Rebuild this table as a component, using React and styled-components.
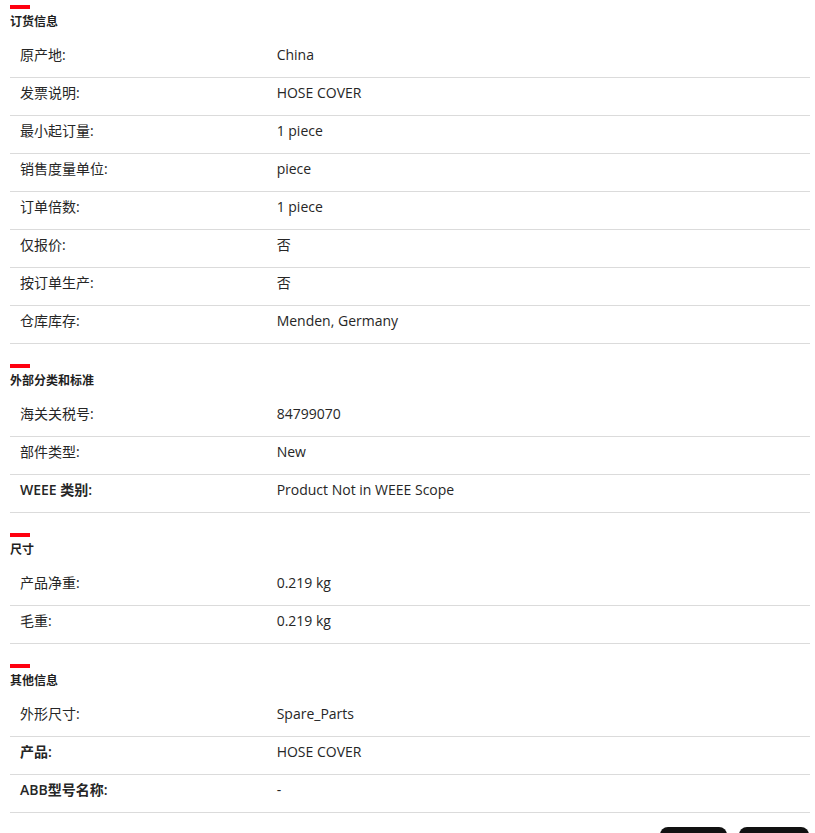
import styled, { createGlobalStyle } from "styled-components";

const GlobalStyle = createGlobalStyle`
  html, body {
    margin: 0;
    padding: 0;
    background: #fff;
  }
  body {
    font-family: "Open Sans", "Noto Sans CJK SC", sans-serif;
    color: #1f1f1f;
  }
`;

const Page = styled.div`
  padding: 5px 5px 0 10px;
`;

const Section = styled.section`
  & + & {
    margin-top: 20px;
  }
`;

const RedBar = styled.div`
  width: 20px;
  height: 4px;
  background: #ff000f;
  margin-bottom: 5px;
`;

const Title = styled.h3`
  margin: 0 0 10px;
  font-size: 12px;
  line-height: 16px;
  font-weight: 700;
  color: #1f1f1f;
`;

const List = styled.dl`
  margin: 0;
`;

const Row = styled.div`
  display: grid;
  grid-template-columns: 1fr 2fr;
  padding: 5px 0 12px;
  border-bottom: 1px solid #dbdbdb;
  font-size: 14px;
  line-height: 20px;
`;

const Label = styled.dt`
  padding-left: 10px;
  font-weight: ${(p) => (p.$bold ? 600 : 400)};
  color: #262626;
`;

const Value = styled.dd`
  margin: 0;
  color: #262626;
`;

const Actions = styled.div`
  display: flex;
  justify-content: flex-end;
  gap: 12px;
  margin: 14px 1px 0 0;
`;

const Button = styled.button`
  width: ${(p) => p.$w}px;
  height: 32px;
  border: none;
  border-radius: 8px;
  background: #111;
`;

const sections = [
  {
    title: "订货信息",
    rows: [
      ["原产地:", "China"],
      ["发票说明:", "HOSE COVER"],
      ["最小起订量:", "1 piece"],
      ["销售度量单位:", "piece"],
      ["订单倍数:", "1 piece"],
      ["仅报价:", "否"],
      ["按订单生产:", "否"],
      ["仓库库存:", "Menden, Germany"],
    ],
  },
  {
    title: "外部分类和标准",
    rows: [
      ["海关关税号:", "84799070"],
      ["部件类型:", "New"],
      ["WEEE 类别:", "Product Not in WEEE Scope", true],
    ],
  },
  {
    title: "尺寸",
    rows: [
      ["产品净重:", "0.219 kg"],
      ["毛重:", "0.219 kg"],
    ],
  },
  {
    title: "其他信息",
    rows: [
      ["外形尺寸:", "Spare_Parts"],
      ["产品:", "HOSE COVER", true],
      ["ABB型号名称:", "-", true],
    ],
  },
];

export default function App() {
  return (
    <>
      <GlobalStyle />
      <Page>
        {sections.map((section) => (
          <Section key={section.title}>
            <RedBar />
            <Title>{section.title}</Title>
            <List>
              {section.rows.map(([label, value, bold]) => (
                <Row key={label}>
                  <Label $bold={bold}>{label}</Label>
                  <Value>{value}</Value>
                </Row>
              ))}
            </List>
          </Section>
        ))}
        <Actions>
          <Button $w={67} aria-label="比较" />
          <Button $w={70} aria-label="分享" />
        </Actions>
      </Page>
    </>
  );
}
